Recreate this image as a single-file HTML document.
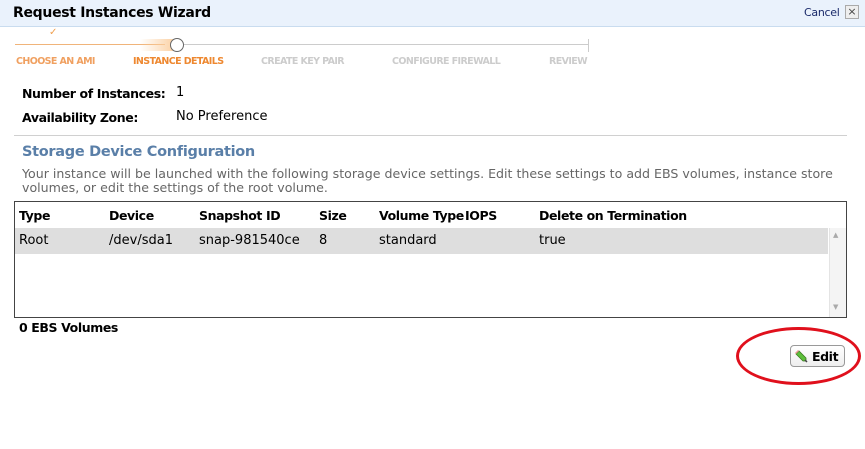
<!DOCTYPE html>
<html><head><style>
*{margin:0;padding:0;box-sizing:border-box}
body{width:865px;height:449px;background:#fff;font-family:"DejaVu Sans","Liberation Sans",sans-serif;font-size:13px;color:#000;position:relative;overflow:hidden}
.a{position:absolute;white-space:nowrap}
.b{font-weight:bold;font-size:12.5px;letter-spacing:-0.4px}
.title{left:0;top:0;width:865px;height:27px;background:#eaf2fc;border-bottom:1px solid #c9dcef}
.step{font-size:9.5px;font-weight:bold;top:56px;letter-spacing:-0.6px}
</style></head><body>
<div class="a title"></div>
<div class="a" style="left:13px;top:5px;font-size:14px;font-weight:bold;letter-spacing:-0.3px">Request Instances Wizard</div>
<div class="a" style="left:804px;top:6px;font-size:11px;color:#1a2a6a;letter-spacing:-0.3px">Cancel</div>
<div class="a" style="left:845px;top:5px;width:14px;height:14px;border:1px solid #aaa;background:#eee;font-size:11px;line-height:12px;text-align:center;color:#444">×</div>

<div class="a" style="left:15px;top:44px;width:150px;height:1px;background:#f0b47a"></div>
<div class="a" style="left:140px;top:39px;width:36px;height:12px;background:linear-gradient(90deg,rgba(255,255,255,0),#fbcfa0)"></div>
<div class="a" style="left:178px;top:44px;width:410px;height:1px;background:#ccc"></div>
<div class="a" style="left:588px;top:39px;width:1px;height:13px;background:#ccc"></div>
<div class="a" style="left:170px;top:38px;width:14px;height:14px;border:1.5px solid #666;border-radius:50%;background:#fff"></div>
<div class="a" style="left:49px;top:27px;font-size:10px;color:#f0a050">✓</div>
<div class="a step" style="left:16px;color:#f0a060">CHOOSE AN AMI</div>
<div class="a step" style="left:133px;color:#ee8830">INSTANCE DETAILS</div>
<div class="a step" style="left:261px;color:#ccc">CREATE KEY PAIR</div>
<div class="a step" style="left:392px;color:#ccc">CONFIGURE FIREWALL</div>
<div class="a step" style="left:549px;color:#ccc">REVIEW</div>

<div class="a b" style="left:22px;top:86px">Number of Instances:</div>
<div class="a" style="left:176px;top:85px">1</div>
<div class="a b" style="left:22px;top:110px">Availability Zone:</div>
<div class="a" style="left:176px;top:109px">No Preference</div>
<div class="a" style="left:14px;top:135px;width:833px;height:1px;background:#d0d0d0"></div>
<div class="a" style="left:22px;top:144px;font-size:14.5px;font-weight:bold;color:#5a7fa8;letter-spacing:-0.3px">Storage Device Configuration</div>
<div class="a" style="left:22px;top:167px;color:#666;line-height:14px;font-size:12.6px">Your instance will be launched with the following storage device settings. Edit these settings to add EBS volumes, instance store<br>volumes, or edit the settings of the root volume.</div>

<div class="a" style="left:14px;top:201px;width:833px;height:117px;border:1px solid #444"></div>
<div class="a" style="left:15px;top:228px;width:813px;height:26px;background:#dedede"></div>
<div class="a" style="left:829px;top:228px;width:17px;height:89px;background:#f4f4f4;border-left:1px solid #e4e4e4"></div>
<div class="a" style="left:833px;top:231px;font-size:7px;color:#aaa">▲</div>
<div class="a" style="left:833px;top:303px;font-size:7px;color:#aaa">▼</div>
<div class="a b" style="left:19px;top:208px">Type</div>
<div class="a b" style="left:109px;top:208px">Device</div>
<div class="a b" style="left:199px;top:208px">Snapshot ID</div>
<div class="a b" style="left:319px;top:208px">Size</div>
<div class="a b" style="left:379px;top:208px">Volume Type</div>
<div class="a b" style="left:465px;top:208px">IOPS</div>
<div class="a b" style="left:539px;top:208px">Delete on Termination</div>
<div class="a" style="left:19px;top:233px">Root</div>
<div class="a" style="left:109px;top:233px">/dev/sda1</div>
<div class="a" style="left:199px;top:233px">snap-981540ce</div>
<div class="a" style="left:319px;top:233px">8</div>
<div class="a" style="left:379px;top:233px">standard</div>
<div class="a" style="left:539px;top:233px">true</div>

<div class="a b" style="left:19px;top:320px">0 EBS Volumes</div>

<div class="a" style="left:790px;top:345px;width:55px;height:22px;border:1px solid #999;border-radius:4px;background:linear-gradient(#fff,#eee)"></div>
<svg class="a" style="left:793px;top:348px" width="16" height="16" viewBox="0 0 16 16"><path d="M3 6 L10 13 L13 13 L13 10 L6 3 Z" fill="#5cbf3a" stroke="#3a7a20" stroke-width="0.8"/><path d="M2 5 L5 2 L6 3 L3 6Z" fill="#e99"/><path d="M12 12 L14 14" stroke="#444" stroke-width="1.5"/></svg>
<div class="a b" style="left:812px;top:349px">Edit</div>
<div class="a" style="left:736px;top:327px;width:125px;height:58px;border:3px solid #e0101c;border-radius:50%"></div>
</body></html>
